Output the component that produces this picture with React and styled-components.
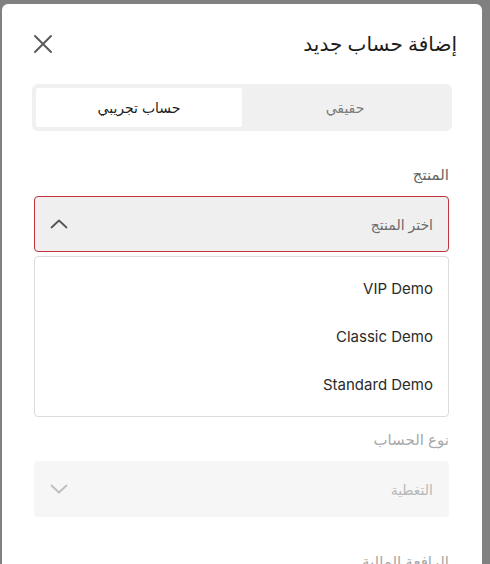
import React from "react"
import styled, { createGlobalStyle } from "styled-components"

const GlobalStyle = createGlobalStyle`
  html, body {
    margin: 0;
    padding: 0;
    background: #808080;
    height: 564px;
    overflow: hidden;
  }
  body {
    font-family: Inter, "DejaVu Sans", sans-serif;
  }
`

const Modal = styled.div`
  direction: rtl;
  margin: 4px 8px 0 2px;
  width: 480px;
  min-height: 600px;
  background: #fff;
  border-radius: 6px 6px 0 0;
  padding: 20px 30px 0 30px;
  box-sizing: border-box;
`

const Header = styled.div`
  display: flex;
  align-items: center;
  justify-content: space-between;
  height: 40px;
  margin: 0 -5px 0 1px;
`

const Title = styled.h2`
  margin: 0;
  font-size: 20px;
  font-weight: 500;
  color: #1c1c1c;
`

const CloseButton = styled.button`
  border: 0;
  background: none;
  padding: 0;
  width: 20px;
  height: 20px;
  display: flex;
  align-items: center;
  justify-content: center;
  cursor: pointer;
`

const Tabs = styled.div`
  display: flex;
  margin-top: 20px;
  height: 47px;
  padding: 4px;
  box-sizing: border-box;
  background: #f0f0f0;
  border-radius: 6px;
`

const Tab = styled.div`
  flex: 1;
  display: flex;
  align-items: center;
  justify-content: center;
  font-size: 14px;
  border-radius: 2px;
  color: ${p => (p.$active ? "#1c1c1c" : "#7a7a7a")};
  background: ${p => (p.$active ? "#fff" : "transparent")};
`

const Form = styled.div`
  margin-top: 34px;
  padding: 0 3px 0 2px;
`

const Field = styled.div`
  margin-bottom: ${p => (p.$open ? "13px" : "35px")};
`

const Label = styled.div`
  font-size: 15px;
  line-height: 20px;
  margin-bottom: 11px;
  color: ${p => (p.$disabled ? "#a8a8a8" : "#666")};
`

const Select = styled.div`
  display: flex;
  align-items: center;
  justify-content: space-between;
  height: 56px;
  box-sizing: border-box;
  padding: 0 15px;
  border-radius: 4px;
  font-size: 14px;
  background: ${p => (p.$disabled ? "#f6f6f6" : "#efefef")};
  border: 1px solid ${p => (p.$error ? "#c0353b" : "transparent")};
  color: ${p => (p.$disabled ? "#b8b8b8" : "#6a6a6a")};
`

const Options = styled.ul`
  list-style: none;
  margin: 4px 0 0;
  padding: 7px 0 8px;
  border: 1px solid #dcdcdc;
  border-radius: 4px;
  background: #fff;
`

const Option = styled.li`
  height: 48px;
  display: flex;
  align-items: center;
  padding: 0 15px;
  font-size: 15px;
  color: #2a2a2a;
`

const Chevron = ({ up, color }) => (
  <svg width="18" height="10" viewBox="0 0 18 10" fill="none">
    <path
      d={up ? "M1.5 8.5 L9 1.5 L16.5 8.5" : "M1.5 1.5 L9 8.5 L16.5 1.5"}
      stroke={color}
      strokeWidth="1.8"
      strokeLinecap="round"
      strokeLinejoin="round"
    />
  </svg>
)

const products = ["VIP Demo", "Classic Demo", "Standard Demo"]

export default function App() {
  return (
    <>
      <GlobalStyle />
      <Modal>
        <Header>
          <Title>إضافة حساب جديد</Title>
          <CloseButton aria-label="close">
            <svg width="20" height="20" viewBox="0 0 20 20">
              <path
                d="M2 2 L18 18 M18 2 L2 18"
                stroke="#5a5a5a"
                strokeWidth="2"
                strokeLinecap="round"
              />
            </svg>
          </CloseButton>
        </Header>

        <Tabs>
          <Tab>حقيقي</Tab>
          <Tab $active>حساب تجريبي</Tab>
        </Tabs>

        <Form>
          <Field $open>
            <Label>المنتج</Label>
            <Select $error>
              <span>اختر المنتج</span>
              <Chevron up color="#555" />
            </Select>
            <Options>
              {products.map(p => (
                <Option key={p}>{p}</Option>
              ))}
            </Options>
          </Field>

          <Field>
            <Label $disabled>نوع الحساب</Label>
            <Select $disabled>
              <span>التغطية</span>
              <Chevron color="#bdbdbd" />
            </Select>
          </Field>

          <Field>
            <Label $disabled>الرافعة المالية</Label>
          </Field>
        </Form>
      </Modal>
    </>
  )
}
